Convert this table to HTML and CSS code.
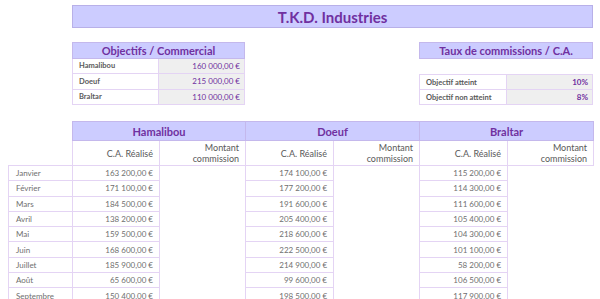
FILE: index.html
```html
<!DOCTYPE html>
<html lang="fr">
<head>
<meta charset="utf-8">
<link rel="stylesheet" href="styles.css">
</head>
<body>
<div class="sheet">
  <div class="title">T.K.D. Industries</div>
  <div class="top">
    <table class="obj">
      <tr><th colspan="2" class="hd">Objectifs / Commercial</th></tr>
      <tr><td class="lab">Hamalibou</td><td class="val">160 000,00 €</td></tr>
      <tr><td class="lab">Doeuf</td><td class="val">215 000,00 €</td></tr>
      <tr><td class="lab">Braltar</td><td class="val">110 000,00 €</td></tr>
    </table>
    <div class="taux">
      <div class="hd taux-hd">Taux de commissions / C.A.</div>
      <table class="obj rates">
        <tr><td class="lab">Objectif atteint</td><td class="val bold">10%</td></tr>
        <tr><td class="lab">Objectif non atteint</td><td class="val bold">8%</td></tr>
      </table>
    </div>
  </div>
  <table class="main">
    <colgroup>
      <col class="c-m"><col class="c-ca"><col class="c-mc"><col class="c-ca2"><col class="c-mc"><col class="c-ca2"><col class="c-mc">
    </colgroup>
    <tr class="r-hd">
      <td class="none"></td>
      <th colspan="2" class="grp">Hamalibou</th>
      <th colspan="2" class="grp">Doeuf</th>
      <th colspan="2" class="grp">Braltar</th>
    </tr>
    <tr class="r-sub">
      <td class="none"></td>
      <td class="sub">C.A. Réalisé</td><td class="sub">Montant<br>commission</td>
      <td class="sub">C.A. Réalisé</td><td class="sub">Montant<br>commission</td>
      <td class="sub">C.A. Réalisé</td><td class="sub">Montant<br>commission</td>
    </tr>
    <tr><td class="mo">Janvier</td><td class="ca">163 200,00 €</td><td class="none"></td><td class="ca">174 100,00 €</td><td class="none"></td><td class="ca">115 200,00 €</td><td class="none"></td></tr>
    <tr><td class="mo">Février</td><td class="ca">171 100,00 €</td><td class="none"></td><td class="ca">177 200,00 €</td><td class="none"></td><td class="ca">114 300,00 €</td><td class="none"></td></tr>
    <tr><td class="mo">Mars</td><td class="ca">184 500,00 €</td><td class="none"></td><td class="ca">191 600,00 €</td><td class="none"></td><td class="ca">111 600,00 €</td><td class="none"></td></tr>
    <tr><td class="mo">Avril</td><td class="ca">138 200,00 €</td><td class="none"></td><td class="ca">205 400,00 €</td><td class="none"></td><td class="ca">105 400,00 €</td><td class="none"></td></tr>
    <tr><td class="mo">Mai</td><td class="ca">159 500,00 €</td><td class="none"></td><td class="ca">218 600,00 €</td><td class="none"></td><td class="ca">104 300,00 €</td><td class="none"></td></tr>
    <tr><td class="mo">Juin</td><td class="ca">168 600,00 €</td><td class="none"></td><td class="ca">222 500,00 €</td><td class="none"></td><td class="ca">101 100,00 €</td><td class="none"></td></tr>
    <tr><td class="mo">Juillet</td><td class="ca">185 900,00 €</td><td class="none"></td><td class="ca">214 900,00 €</td><td class="none"></td><td class="ca">58 200,00 €</td><td class="none"></td></tr>
    <tr><td class="mo">Août</td><td class="ca">65 600,00 €</td><td class="none"></td><td class="ca">99 600,00 €</td><td class="none"></td><td class="ca">106 500,00 €</td><td class="none"></td></tr>
    <tr><td class="mo">Septembre</td><td class="ca">150 400,00 €</td><td class="none"></td><td class="ca">198 500,00 €</td><td class="none"></td><td class="ca">117 900,00 €</td><td class="none"></td></tr>
  </table>
</div>
</body>
</html>
```
FILE: styles.css
```css
html, body { margin: 0; padding: 0; background: #fff; }
body { font-family: Lato, "Open Sans", sans-serif; color: #595959; overflow: hidden; }
.sheet { padding: 5px 0 0 8px; width: 585px; }
.title {
  margin-left: 64px; width: 519px; height: 21px;
  background: #ccccff; border: 1px solid #b8b0e8;
  color: #7030a0; font-weight: bold; font-size: 15px;
  display: flex; align-items: center; justify-content: center;
}
.top { display: flex; justify-content: space-between; margin: 14px 0 0 64px; width: 521px; }
table { border-collapse: collapse; table-layout: fixed; }
.obj { width: 173px; }
.obj td, .obj th { height: 14px; padding: 0 4px; }
.hd {
  background: #ccccff; border: 1px solid #c4b8ec; color: #7030a0;
  font-weight: bold; font-size: 11px; text-align: center; height: 14px;
}
.lab { border: 1px solid #e4d4f4; font-size: 7.5px; font-weight: bold; color: #595959; text-align: left; padding-left: 6px !important; width: 76px; }
.val { border: 1px solid #e4d4f4; background: #efefef; font-size: 8px; color: #7030a0; text-align: right; }
.val.bold { font-weight: bold; }
.taux { width: 174px; }
.taux-hd { height: 15px; line-height: 15px; }
.rates { width: 174px; margin-top: 15px; }
.main { margin-top: 16px; width: 585px; }
.c-m { width: 64px; }
.c-ca { width: 87px; }
.c-ca2 { width: 88px; }
.c-mc { width: 86px; }
.main td, .main th { padding: 0 6px; }
.grp { background: #ccccff; border: 1px solid #c4b8ec; color: #7030a0; font-size: 11px; font-weight: bold; text-align: center; }
.sub { border: 1px solid #e4d4f4; text-align: right; font-size: 9px; line-height: 11px; color: #595959; }
.main tr { height: 15.3px; }
.main .r-hd { height: 19px; }
.main .r-sub { height: 25px; }
.mo { border: 1px solid #e4d4f4; font-size: 8px; color: #6f6f6f; padding-left: 7px !important; }
.ca { border: 1px solid #e4d4f4; font-size: 8px; color: #6f6f6f; text-align: right; }
.none { border: none; }
```
